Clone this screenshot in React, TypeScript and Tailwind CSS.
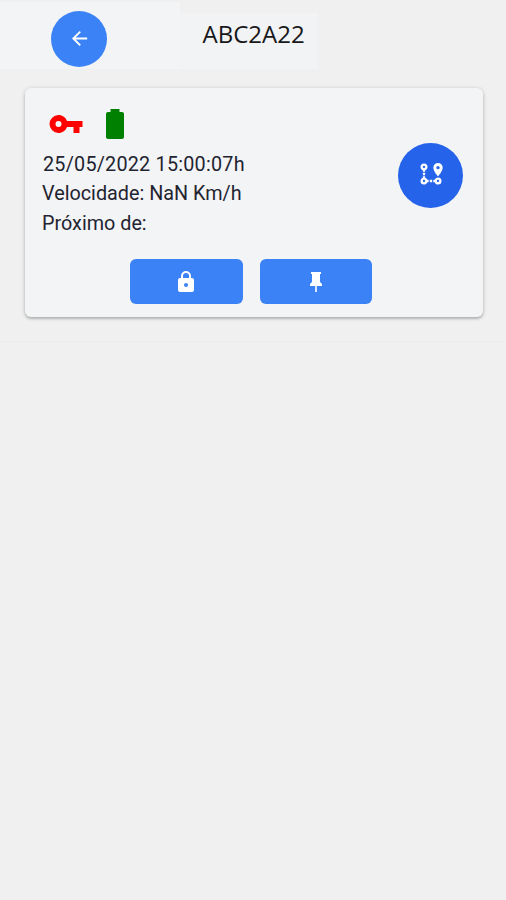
interface IconProps {
  path: string;
  className?: string;
}

interface Vehicle {
  plate: string;
  date: string;
  speed: string;
  address: string;
}

const icons = {
  arrowLeft: 'M20,11V13H8L13.5,18.5L12.08,19.92L4.16,12L12.08,4.08L13.5,5.5L8,11H20Z',
  key: 'M7,14A2,2 0 0,1 5,12A2,2 0 0,1 7,10A2,2 0 0,1 9,12A2,2 0 0,1 7,14M12.65,10C11.83,7.67 9.61,6 7,6A6,6 0 0,0 1,12A6,6 0 0,0 7,18C9.61,18 11.83,16.33 12.65,14H17V18H21V14H23V10H12.65Z',
  battery: 'M16.67,4H15V2H9V4H7.33A1.33,1.33 0 0,0 6,5.33V20.67C6,21.4 6.6,22 7.33,22H16.67A1.33,1.33 0 0,0 18,20.67V5.33C18,4.6 17.4,4 16.67,4Z',
  lock: 'M12,17A2,2 0 0,0 14,15C14,13.89 13.1,13 12,13A2,2 0 0,0 10,15A2,2 0 0,0 12,17M18,8A2,2 0 0,1 20,10V20A2,2 0 0,1 18,22H6A2,2 0 0,1 4,20V10C4,8.89 4.9,8 6,8H7V6A5,5 0 0,1 12,1A5,5 0 0,1 17,6V8H18M12,3A3,3 0 0,0 9,6V8H15V6A3,3 0 0,0 12,3Z',
  pin: 'M16,12V4H17V2H7V4H8V12L6,14V16H11.2V22H12.8V16H18V14L16,12Z',
  route: 'M18,15A3,3 0 0,1 21,18A3,3 0 0,1 18,21C16.69,21 15.58,20.17 15.17,19H14V17H15.17C15.58,15.83 16.69,15 18,15M18,17A1,1 0 0,0 17,18A1,1 0 0,0 18,19A1,1 0 0,0 19,18A1,1 0 0,0 18,17M18,8A1.43,1.43 0 0,0 19.43,6.57C19.43,5.78 18.79,5.14 18,5.14C17.21,5.14 16.57,5.78 16.57,6.57A1.43,1.43 0 0,0 18,8M18,2.57A4,4 0 0,1 22,6.57C22,9.56 18,14 18,14C18,14 14,9.56 14,6.57A4,4 0 0,1 18,2.57M8.83,17H10V19H8.83C8.42,20.17 7.31,21 6,21A3,3 0 0,1 3,18C3,16.69 3.83,15.58 5,15.17V14H7V15.17C7.85,15.47 8.53,16.15 8.83,17M6,17A1,1 0 0,0 5,18A1,1 0 0,0 6,19A1,1 0 0,0 7,18A1,1 0 0,0 6,17M6,3A3,3 0 0,1 9,6C9,7.31 8.17,8.42 7,8.83V10H5V8.83C3.83,8.42 3,7.31 3,6A3,3 0 0,1 6,3M6,5A1,1 0 0,0 5,6A1,1 0 0,0 6,7A1,1 0 0,0 7,6A1,1 0 0,0 6,5M11,19V17H13V19H11M7,13H5V11H7V13Z',
};

const vehicle: Vehicle = {
  plate: 'ABC2A22',
  date: '25/05/2022 15:00:07h',
  speed: 'NaN Km/h',
  address: '',
};

const Icon = ({ path, className }: IconProps) => (
  <svg viewBox="0 0 24 24" fill="currentColor" className={className}>
    <path d={path} />
  </svg>
);

const Header = ({ plate }: { plate: string }) => (
  <header className="flex h-[69px] items-end">
    <div className="h-[67px] w-[180px] bg-[#f2f4f5] pt-[8.5px] pl-[51px]">
      <button className="flex h-14 w-14 items-center justify-center rounded-full bg-[#3b82f6] text-white">
        <Icon path={icons.arrowLeft} className="h-[23px] w-[23px]" />
      </button>
    </div>
    <div className="h-14 w-[138px] bg-[#f2f3f4] pt-[5px] pl-[22.5px]">
      <h1 className="font-['Open_Sans',sans-serif] text-2xl leading-8 whitespace-nowrap text-[#18181b]">
        {plate}
      </h1>
    </div>
  </header>
);

const VehicleCard = ({ date, speed, address }: Vehicle) => (
  <section className="mt-[19px] mr-[23px] ml-[25px] h-[229px] rounded-md bg-[#f3f4f6] shadow-[0_1px_4px_rgba(0,0,0,0.22),0_2px_2px_rgba(0,0,0,0.12)]">
    <div className="flex justify-between pt-[18px] pr-5 pl-[17px]">
      <div>
        <div className="flex gap-[13px] pl-[6px]">
          <Icon path={icons.key} className="h-9 w-9 text-[#ff0000]" />
          <Icon path={icons.battery} className="h-9 w-9 text-[#008000]" />
        </div>
        <div className="mt-2 font-[Roboto,sans-serif] text-[19.8px] leading-[29.4px] whitespace-nowrap text-[#1f2430]">
          <p className="pl-px tracking-[0.22px]">{date}</p>
          <p>Velocidade: {speed}</p>
          <p>Próximo de: {address}</p>
        </div>
      </div>
      <button className="mt-[37px] flex h-[65px] w-[65px] items-center justify-center rounded-full bg-[#2563eb] text-white">
        <Icon path={icons.route} className="mb-[3px] h-7 w-7" />
      </button>
    </div>
    <div className="mt-[21px] flex gap-[17px] pl-[105px]">
      <button className="flex h-[45px] w-[112.5px] items-center justify-center rounded-md bg-[#3b82f6] text-white">
        <Icon path={icons.lock} className="h-6 w-6" />
      </button>
      <button className="flex h-[45px] w-[112.5px] items-center justify-center rounded-md bg-[#3b82f6] text-white">
        <Icon path={icons.pin} className="h-6 w-6" />
      </button>
    </div>
  </section>
);

const App = () => {
  return (
    <div className="min-h-screen w-full bg-[#f0f0f0]">
      <div className="h-[342px] border-b border-[#ebebeb]">
        <Header plate={vehicle.plate} />
        <VehicleCard {...vehicle} />
      </div>
    </div>
  );
};

export default App;
